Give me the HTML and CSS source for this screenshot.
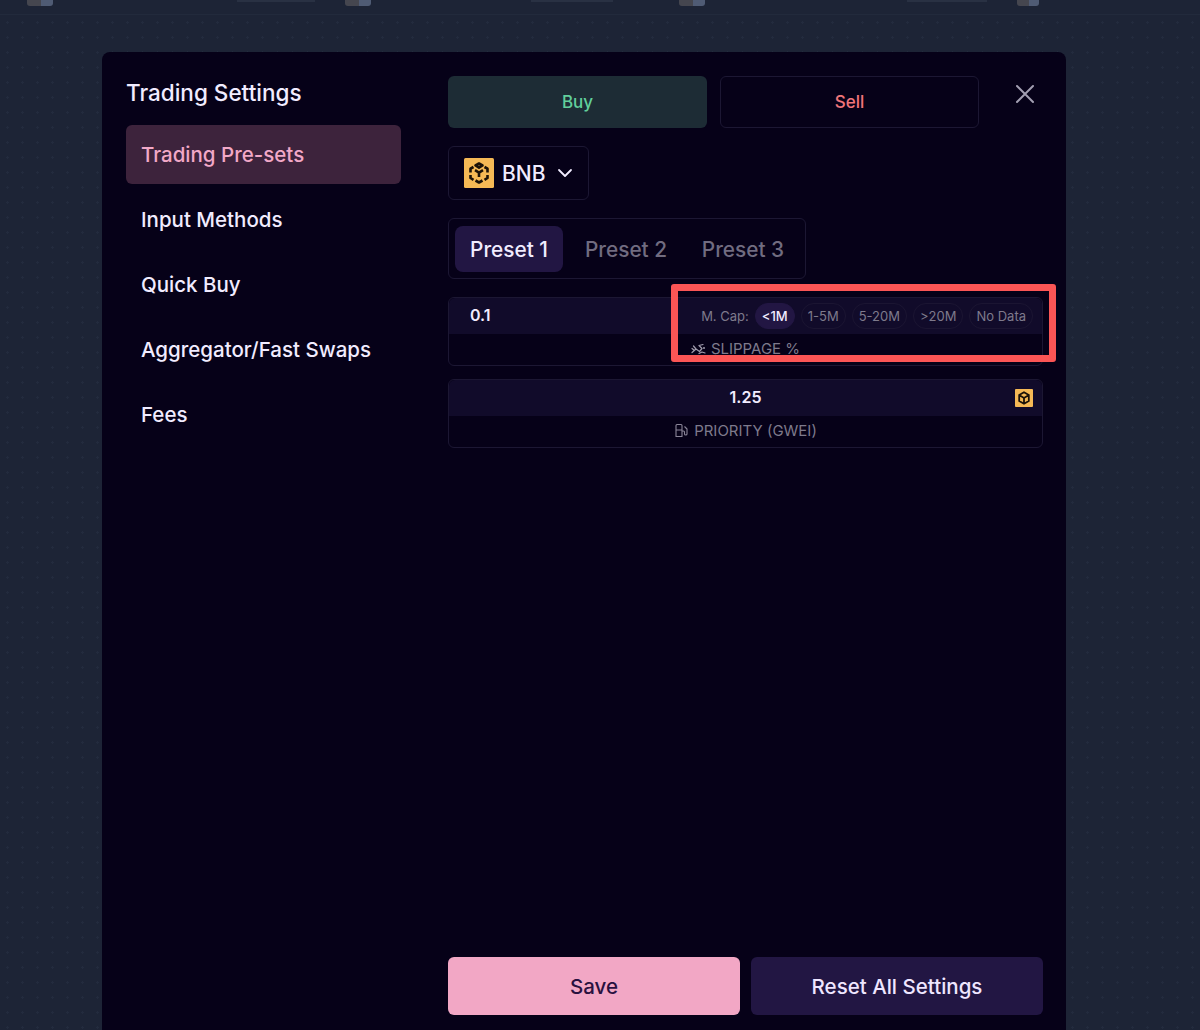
FILE: index.html
```html
<!DOCTYPE html>
<html lang="en">
<head>
    <meta charset="UTF-8">
    <meta name="viewport" content="width=device-width, initial-scale=1.0">
    <title>Trading Settings</title>
    <link rel="stylesheet" href="styles.css">
</head>
<body>
    <div class="topbar">
        <span class="blob blob-a"></span>
        <span class="bar bar-a"></span>
        <span class="blob blob-b"></span>
        <span class="bar bar-b"></span>
        <span class="blob blob-c"></span>
        <span class="bar bar-c"></span>
        <span class="blob blob-d"></span>
    </div>

    <div class="modal">
        <aside class="sidebar">
            <h2 class="sidebar-title">Trading Settings</h2>
            <a class="nav-item active">Trading Pre-sets</a>
            <a class="nav-item">Input Methods</a>
            <a class="nav-item">Quick Buy</a>
            <a class="nav-item">Aggregator/Fast Swaps</a>
            <a class="nav-item">Fees</a>
        </aside>

        <main class="content">
            <div class="side-row">
                <button class="side-btn buy">Buy</button>
                <button class="side-btn sell">Sell</button>
                <button class="close-btn" aria-label="Close">
                    <svg width="20" height="20" viewBox="0 0 20 20"><path d="M2 2 L18 18 M18 2 L2 18" stroke="#a39fb2" stroke-width="2" stroke-linecap="round"/></svg>
                </button>
            </div>

            <button class="chain-select">
                <svg class="bnb bnb-large" viewBox="0 0 30 30">
                    <rect width="30" height="30" rx="1.5" fill="#f5b955"/>
                    <g fill="none" stroke="#1b1208" stroke-width="2.6" stroke-linejoin="round">
                        <path d="M11.5 7.5 L15 5.5 L18.5 7.5 L15 9.6 Z"/>
                        <path d="M20.5 9 L23.5 10.7 V14.5 M23.5 17 V20 L20.5 21.8"/>
                        <path d="M9.5 9 L6.5 10.7 V14.5 M6.5 17 V20 L9.5 21.8"/>
                        <path d="M11 12.2 L15 14.6 L19 12.2 M15 14.6 V19"/>
                        <path d="M11.5 22.5 L15 24.5 L18.5 22.5"/>
                    </g>
                </svg>
                <span>BNB</span>
                <svg width="16" height="16" viewBox="0 0 16 16"><path d="M2 5 L8 11 L14 5" fill="none" stroke="#f1ecff" stroke-width="1.8" stroke-linecap="round" stroke-linejoin="round"/></svg>
            </button>

            <div class="presets">
                <button class="preset active">Preset 1</button>
                <button class="preset">Preset 2</button>
                <button class="preset">Preset 3</button>
            </div>

            <div class="field">
                <div class="field-top">
                    <span class="value-left">0.1</span>
                    <div class="mcap">
                        <span class="mcap-label">M. Cap:</span>
                        <span class="pill active">&lt;1M</span>
                        <span class="pill">1-5M</span>
                        <span class="pill">5-20M</span>
                        <span class="pill">&gt;20M</span>
                        <span class="pill">No Data</span>
                    </div>
                </div>
                <div class="field-label">
                    <svg width="15" height="12" viewBox="0 0 15 12"><path d="M1 9.5 L5 6 L2.5 3 M5 6 L8.5 8.5 L11 5.5 L8 2.5 L12 1.5 M1 5.5 L3.5 7.5 M8 10.5 L11 9 L14 10" fill="none" stroke="#a19cad" stroke-width="1.2" stroke-linecap="round" stroke-linejoin="round"/><circle cx="13" cy="5" r="1" fill="#a19cad"/></svg>
                    <span>SLIPPAGE %</span>
                </div>
                <div class="highlight"></div>
            </div>

            <div class="field">
                <div class="field-top center">
                    <span>1.25</span>
                    <svg class="bnb bnb-small" viewBox="0 0 30 30">
                        <rect width="30" height="30" rx="1.5" fill="#f5b955"/>
                        <path d="M15 5.5 L23 10 V20 L15 24.5 L7 20 V10 Z M7.5 10.5 L15 15 L22.5 10.5 M15 15 V24" fill="none" stroke="#1b1208" stroke-width="3"/>
                    </svg>
                </div>
                <div class="field-label">
                    <svg width="15" height="15" viewBox="0 0 15 15"><path d="M2 13.5 V2.5 Q2 1.5 3 1.5 H7 Q8 1.5 8 2.5 V13.5 Z M2 7 H8 M8 8 H9.5 Q10.5 8 10.5 9 V11 Q10.5 12 11.7 12 Q13 12 13 11 V6 L10.5 3.5" fill="none" stroke="#8b8699" stroke-width="1.1" stroke-linejoin="round"/></svg>
                    <span>PRIORITY (GWEI)</span>
                </div>
            </div>

            <div class="actions">
                <button class="action save">Save</button>
                <button class="action reset">Reset All Settings</button>
            </div>
        </main>
    </div>
</body>
</html>
```

FILE: styles.css
```css
* {
    margin: 0;
    padding: 0;
    box-sizing: border-box;
}
html, body {
    height: 1030px;
    overflow: hidden;
}
body {
    font-family: Inter, "Noto Sans", sans-serif;
    background-color: #1d2436;
    background-image: radial-gradient(#232b3e 1px, transparent 1.2px);
    background-size: 15px 15px;
    color: #f1ecff;
}
button {
    font-family: inherit;
    border: none;
    background: none;
    color: inherit;
}

/* Top bar, cut off by the screenshot */
.topbar {
    height: 15px;
    background-color: #1d2436;
    border-bottom: 1px solid #222a3c;
    display: flex;
    align-items: flex-start;
}
.blob {
    width: 26px;
    height: 6px;
    border-radius: 0 0 3px 3px;
    background: linear-gradient(90deg, #45464f 55%, #4f5b74 55%);
}
.bar {
    height: 2px;
    background-color: #293143;
}
.blob-a { margin-left: 27px; }
.bar-a { width: 78px; margin-left: 184px; }
.blob-b { margin-left: 30px; }
.bar-b { width: 82px; margin-left: 160px; }
.blob-c { margin-left: 66px; }
.bar-c { width: 80px; margin-left: 202px; }
.blob-d { margin-left: 30px; width: 22px; }

/* Modal */
.modal {
    width: 964px;
    height: 978px;
    margin: 37px 0 0 102px;
    padding: 24px 23px 15px 24px;
    background-color: #060118;
    border-radius: 8px 8px 0 0;
    display: flex;
    gap: 47px;
}
.sidebar {
    width: 275px;
    flex-shrink: 0;
}
.sidebar-title {
    font-size: 22.5px;
    font-weight: 500;
    line-height: 34px;
    margin-bottom: 15px;
}
.nav-item {
    display: block;
    height: 59px;
    line-height: 59px;
    padding-left: 15px;
    margin-bottom: 6px;
    font-size: 20.5px;
    font-weight: 500;
    border-radius: 6px;
}
.nav-item.active {
    background-color: #3d233c;
    color: #f2a8c7;
}

.content {
    flex: 1;
    display: flex;
    flex-direction: column;
    align-items: flex-start;
}
.side-row {
    width: 100%;
    display: flex;
    gap: 13px;
    margin-bottom: 18px;
}
.side-btn {
    width: 259px;
    height: 52px;
    border-radius: 6px;
    font-size: 17px;
    font-weight: 500;
}
.buy {
    background-color: #1d2c35;
    color: #62cf9c;
}
.sell {
    border: 1px solid #1c1733;
    color: #f0757a;
}
.close-btn {
    height: 36px;
    margin-left: 23px;
    padding: 0;
    display: flex;
    align-items: center;
}

.chain-select {
    width: 141px;
    height: 54px;
    border: 1px solid #1c1733;
    border-radius: 6px;
    padding-left: 15px;
    margin-bottom: 18px;
    display: flex;
    align-items: center;
    gap: 8px;
    font-size: 21px;
    font-weight: 500;
}
.chain-select span {
    margin-right: 4px;
}
.bnb {
    display: block;
    flex-shrink: 0;
}
.bnb-large {
    width: 30px;
    height: 30px;
}
.bnb-small {
    width: 18px;
    height: 18px;
    position: absolute;
    right: 9px;
    top: 9px;
}

.presets {
    width: 358px;
    height: 61px;
    border: 1px solid #1c1733;
    border-radius: 6px;
    padding: 7px 6px;
    margin-bottom: 18px;
    display: flex;
    gap: 9px;
}
.preset {
    width: 108px;
    height: 46px;
    border-radius: 8px;
    font-size: 20.8px;
    font-weight: 500;
    color: #716c80;
}
.preset.active {
    background-color: #221643;
    color: #f1ecff;
}

.field {
    position: relative;
    width: 100%;
    height: 69px;
    border: 1px solid #1c1733;
    border-radius: 6px;
    margin-bottom: 13px;
}
.field-top {
    position: relative;
    height: 36px;
    background-color: #110b2a;
    border-radius: 6px 6px 0 0;
    padding: 0 9px 0 21px;
    display: flex;
    align-items: center;
    justify-content: space-between;
    font-size: 16px;
    font-weight: 600;
}
.value-left {
    margin-bottom: 2px;
}
.field-top.center {
    justify-content: center;
    padding: 0 0 3px;
}
.field-label {
    height: 29px;
    display: flex;
    align-items: center;
    justify-content: center;
    gap: 5px;
    font-size: 15px;
    color: #7e7a8c;
}
.mcap {
    display: flex;
    align-items: center;
    gap: 6px;
}
.mcap-label {
    font-size: 13px;
    font-weight: 400;
    color: #7e7a8c;
}
.pill {
    height: 26px;
    line-height: 24px;
    padding: 0 6px;
    border: 1px solid #1b1532;
    border-radius: 13px;
    font-size: 13px;
    font-weight: 400;
    color: #7e7a8c;
}
.pill.active {
    background-color: #221643;
    border-color: #221643;
    color: #f1ecff;
    font-weight: 500;
}

/* Red annotation box over the market cap row */
.highlight {
    position: absolute;
    left: 222px;
    top: -14px;
    width: 385px;
    height: 78px;
    border: 7px solid #fb5555;
    border-radius: 3px;
    pointer-events: none;
}

.actions {
    width: 100%;
    margin-top: auto;
    display: flex;
    gap: 11px;
}
.action {
    flex: 1;
    height: 58px;
    border-radius: 6px;
    font-size: 20.5px;
    font-weight: 500;
}
.save {
    background-color: #f2a7c5;
    color: #2a1140;
}
.reset {
    background-color: #221643;
    color: #efe6ff;
}
```
